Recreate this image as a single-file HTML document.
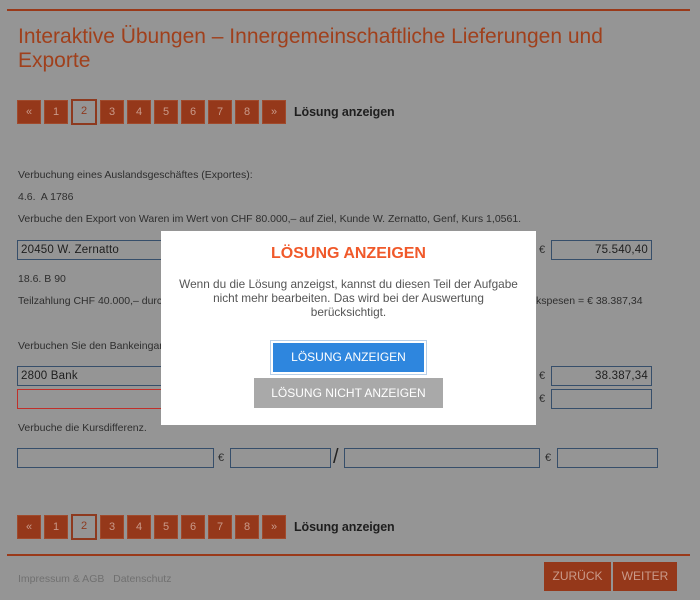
<!DOCTYPE html>
<html><head><meta charset="utf-8"><style>
*{margin:0;padding:0;box-sizing:border-box}
body{width:700px;height:600px;background:#959595;font-family:"Liberation Sans",sans-serif;position:relative;overflow:hidden;color:#333}
.a{position:absolute}
.line{background:#9a3a1a;height:2px}
.t{font-size:10.5px;color:#2e2e2e;white-space:nowrap}
.pg{position:absolute;width:24px;height:24px;background:#95381a;border:1px solid #a04a2c;color:#c99a8a;font-size:11px;text-align:center;line-height:22px}
.pg.cur{background:transparent;border:2px solid #8e3a1f;color:#8e3a1f;line-height:20px;width:26px;height:26px}
.lz{font-size:12.5px;font-weight:bold;color:#1e1e1e;letter-spacing:-.1px}
.in{position:absolute;height:20px;border:1px solid #364e6a;font-size:11.5px;color:#1e1e1e;padding:3px 3px;letter-spacing:.2px}
.eur{font-size:11px;color:#2e2e2e}
.btn{position:absolute;background:#95381a;color:#c99a8a;font-size:12px;text-align:center;line-height:29px;height:29px}
</style></head><body>
<div class="a line" style="left:7px;top:9px;width:683px"></div>
<div class="a" style="left:18px;top:25px;font-size:21px;line-height:24px;color:#a0401c;width:640px">Interaktive Übungen – Innergemeinschaftliche Lieferungen und Exporte</div>

<div class="pg" style="left:17px;top:100px">«</div>
<div class="pg" style="left:44px;top:100px">1</div>
<div class="pg cur" style="left:71px;top:99px">2</div>
<div class="pg" style="left:100px;top:100px">3</div>
<div class="pg" style="left:127px;top:100px">4</div>
<div class="pg" style="left:154px;top:100px">5</div>
<div class="pg" style="left:181px;top:100px">6</div>
<div class="pg" style="left:208px;top:100px">7</div>
<div class="pg" style="left:235px;top:100px">8</div>
<div class="pg" style="left:262px;top:100px">»</div>
<div class="a lz" style="left:294px;top:105px">Lösung anzeigen</div>

<div class="a t" style="left:18px;top:169px">Verbuchung eines Auslandsgeschäftes (Exportes):</div>
<div class="a t" style="left:18px;top:191px">4.6.&nbsp; A 1786</div>
<div class="a t" style="left:18px;top:213px">Verbuche den Export von Waren im Wert von CHF 80.000,– auf Ziel, Kunde W. Zernatto, Genf, Kurs 1,0561.</div>
<div class="in" style="left:17px;top:240px;width:160px">20450 W. Zernatto</div>
<div class="a eur" style="left:539px;top:244px">€</div>
<div class="in" style="left:551px;top:240px;width:101px;text-align:right">75.540,40</div>
<div class="a t" style="left:18px;top:273px">18.6. B 90</div>
<div class="a t" style="left:18px;top:295px">Teilzahlung CHF 40.000,– durch</div>
<div class="a t" style="left:536px;top:295px">kspesen = € 38.387,34</div>
<div class="a t" style="left:18px;top:340px">Verbuchen Sie den Bankeingang</div>
<div class="in" style="left:17px;top:366px;width:160px">2800 Bank</div>
<div class="in" style="left:17px;top:389px;width:160px;border-color:#c0302a"></div>
<div class="a eur" style="left:539px;top:370px">€</div>
<div class="in" style="left:551px;top:366px;width:101px;text-align:right">38.387,34</div>
<div class="a eur" style="left:539px;top:393px">€</div>
<div class="in" style="left:551px;top:389px;width:101px"></div>
<div class="a t" style="left:18px;top:422px">Verbuche die Kursdifferenz.</div>
<div class="in" style="left:17px;top:448px;width:197px"></div>
<div class="a eur" style="left:218px;top:452px">€</div>
<div class="in" style="left:230px;top:448px;width:101px"></div>
<div class="a" style="left:333px;top:446px;font-size:20px;color:#222">/</div>
<div class="in" style="left:344px;top:448px;width:196px"></div>
<div class="a eur" style="left:545px;top:452px">€</div>
<div class="in" style="left:557px;top:448px;width:101px"></div>

<div class="pg" style="left:17px;top:515px">«</div>
<div class="pg" style="left:44px;top:515px">1</div>
<div class="pg cur" style="left:71px;top:514px">2</div>
<div class="pg" style="left:100px;top:515px">3</div>
<div class="pg" style="left:127px;top:515px">4</div>
<div class="pg" style="left:154px;top:515px">5</div>
<div class="pg" style="left:181px;top:515px">6</div>
<div class="pg" style="left:208px;top:515px">7</div>
<div class="pg" style="left:235px;top:515px">8</div>
<div class="pg" style="left:262px;top:515px">»</div>
<div class="a lz" style="left:294px;top:520px">Lösung anzeigen</div>

<div class="a line" style="left:7px;top:554px;width:683px"></div>
<div class="a" style="left:18px;top:573px;font-size:10.5px;color:#707070">Impressum &amp; AGB&nbsp;&nbsp; Datenschutz</div>
<div class="btn" style="left:544px;top:562px;width:67px">ZURÜCK</div>
<div class="btn" style="left:613px;top:562px;width:64px">WEITER</div>

<div class="a" style="left:161px;top:231px;width:375px;height:194px;background:#fff">
<div class="a" style="left:0;top:14px;width:375px;text-align:center;font-size:16px;font-weight:bold;color:#f0592a">LÖSUNG ANZEIGEN</div>
<div class="a" style="left:15px;top:46px;width:345px;text-align:center;font-size:11.8px;line-height:14px;color:#555">Wenn du die Lösung anzeigst, kannst du diesen Teil der Aufgabe<br>nicht mehr bearbeiten. Das wird bei der Auswertung<br>berücksichtigt.</div>
<div class="a" style="left:109px;top:109px;width:157px;height:35px;border:1px solid #b8cfe8;padding:2px"><div style="background:#2e86de;height:29px;color:#fff;font-size:12px;text-align:center;line-height:29px">LÖSUNG ANZEIGEN</div></div>
<div class="a" style="left:93px;top:147px;width:189px;height:30px;background:#a9a9a9;color:#fff;font-size:12px;text-align:center;line-height:30px">LÖSUNG NICHT ANZEIGEN</div>
</div>
</body></html>
